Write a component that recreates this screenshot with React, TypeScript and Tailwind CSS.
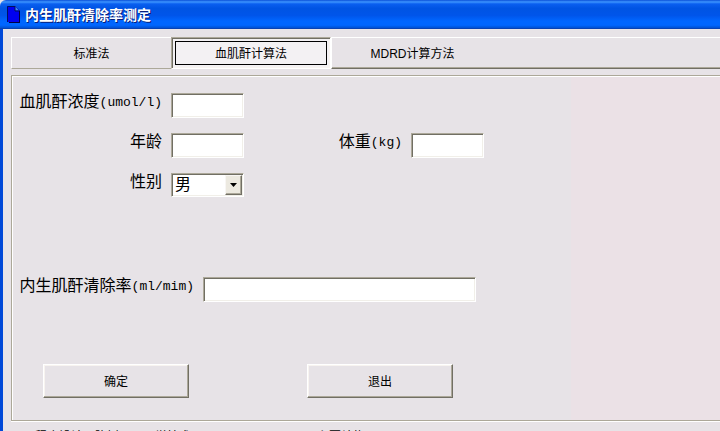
import { useState } from 'react';

const tabs = [
  { id: 'standard', label: '标准法' },
  { id: 'creatinine', label: '血肌酐计算法' },
  { id: 'mdrd', label: 'MDRD计算方法' },
];

const sunken =
  'border border-t-[#aca899] border-l-[#aca899] border-r-white border-b-white bg-white shadow-[inset_1px_1px_0_#716f64,inset_-1px_-1px_0_#f1efe9] outline-none';
const raised =
  'border border-t-white border-l-white border-r-[#716f64] border-b-[#716f64] bg-[#e7e3e7] shadow-[inset_-1px_-1px_0_#aca899,inset_1px_1px_0_#f8f4f0]';

function Label({ htmlFor, text, unit, className }: { htmlFor: string; text: string; unit?: string; className?: string }) {
  return (
    <label htmlFor={htmlFor} className={`flex justify-end whitespace-nowrap text-base leading-[18px] ${className ?? ''}`}>
      {text}
      {unit && <span className="font-['Liberation_Mono',monospace] text-[13px] leading-5">{unit}</span>}
    </label>
  );
}

export default function App() {
  const [active, setActive] = useState('creatinine');
  const [sex, setSex] = useState('男');

  return (
    <div className="flex h-screen flex-col overflow-hidden bg-[#e7e3e7] font-['Liberation_Sans','Noto_Sans_CJK_SC',sans-serif] text-black">
      {/* Title bar */}
      <header className="flex h-[29px] flex-none items-center gap-1 rounded-tl-md border-b border-[#0842b5] bg-[linear-gradient(180deg,#0a50d8_0%,#3d95ff_7%,#0a5ff0_14%,#0054e3_30%,#0055ea_55%,#0066ff_75%,#0066ff_90%,#0050d0_100%)] pl-[7px] pt-px">
        <svg width="14" height="17" viewBox="0 0 14 17" aria-hidden="true">
          <path d="M2 1h7l4 4v12H2z" fill="#000040" />
          <path d="M0 0h8l4 4v12H0z" fill="#0000f0" />
          <path d="M.5 16V.5H8" fill="none" stroke="#001060" />
          <path d="M8 0l4 4.500H8z" fill="#4088f0" />
          <path d="M8 0v5h4" fill="none" stroke="#001060" />
        </svg>
        <h1 className="text-sm font-bold leading-5 text-white [text-shadow:1px_1px_0_#0a1e78]">内生肌酐清除率测定</h1>
      </header>

      <main className="flex-1 border-l-[3px] border-[#0048d8] pl-2 pt-2">
        {/* Tabs */}
        <div role="tablist" className="flex h-8 text-xs">
          {tabs.map((tab) => (
            <button
              key={tab.id}
              type="button"
              role="tab"
              aria-selected={active === tab.id}
              onClick={() => setActive(tab.id)}
              className={`w-40 flex-none last:w-auto last:flex-1 last:pr-[227px] ${
                active === tab.id
                  ? 'border border-t-[#aca899] border-l-[#aca899] border-r-white border-b-white bg-[#f3f1f3] p-[3px] shadow-[inset_1px_1px_0_#716f64,inset_-1px_-1px_0_#f8f4f0]'
                  : 'border-t border-l border-b border-t-white border-l-white border-b-[#716f64] pt-0.5 shadow-[inset_0_-1px_0_#aca899] first:border-b-[#aca899] first:shadow-none'
              }`}
            >
              <span className={`flex h-full items-center justify-center ${active === tab.id ? 'border border-black pt-0.5' : ''}`}>
                {tab.label}
              </span>
            </button>
          ))}
        </div>

        {/* Form panel */}
        <form
          onSubmit={(e) => e.preventDefault()}
          className="mt-1.5 border border-r-0 border-[#aca899] bg-[linear-gradient(90deg,#e7e3e7_79%,#ebe1e6_79%)] shadow-[inset_1px_1px_0_#fff,0_1px_0_#fff]"
        >
          <div className="flex flex-col gap-[15px] pt-[17px]">
            <div className="flex items-start gap-[9px]">
              <Label htmlFor="scr" text="血肌酐浓度" unit="(umol/l)" className="w-[150px]" />
              <input id="scr" className={`h-[25px] w-[73px] px-1 ${sunken}`} />
            </div>
            <div className="flex items-start gap-[9px]">
              <Label htmlFor="age" text="年龄" className="w-[150px]" />
              <input id="age" className={`h-[25px] w-[73px] px-1 ${sunken}`} />
              <Label htmlFor="weight" text="体重" unit="(kg)" className="w-[149px]" />
              <input id="weight" className={`h-[25px] w-[73px] px-1 ${sunken}`} />
            </div>
            <div className="flex items-start gap-[9px]">
              <Label htmlFor="sex" text="性别" className="w-[150px]" />
              <div className="relative">
                <select
                  id="sex"
                  value={sex}
                  onChange={(e) => setSex(e.target.value)}
                  className={`block h-6 w-[73px] appearance-none pl-[3px] text-base leading-5 ${sunken}`}
                >
                  <option>男</option>
                  <option>女</option>
                </select>
                <span className="pointer-events-none absolute inset-y-0.5 right-0.5 flex w-[17px] items-center justify-center border border-t-[#f8f6f4] border-l-[#f8f6f4] border-r-[#716f64] border-b-[#716f64] bg-[#ece9e0] shadow-[inset_-1px_-1px_0_#aca899]">
                  <svg width="7" height="4" viewBox="0 0 7 4" aria-hidden="true">
                    <path d="M0 0h7L3.500 4z" />
                  </svg>
                </span>
              </div>
            </div>
          </div>

          <div className="flex items-start gap-[9px] pt-20">
            <Label htmlFor="ccr" text="内生肌酐清除率" unit="(ml/mim)" className="w-[182px]" />
            <input id="ccr" readOnly className={`h-[25px] w-[273px] px-1 ${sunken}`} />
          </div>

          <div className="flex gap-[118px] pt-[62px] pr-4 pb-[22px] pl-[31px] text-xs">
            <button type="submit" className={`h-[34px] w-[146px] pt-0.5 ${raised}`}>确定</button>
            <button type="button" className={`h-[34px] w-[146px] pt-0.5 ${raised}`}>退出</button>
          </div>
        </form>

        <footer className="flex gap-[126px] whitespace-nowrap pt-2 pl-6 text-xs leading-4">
          <p>程序设计：陈树国、医学技术</p>
          <p>主要结构</p>
        </footer>
      </main>
    </div>
  );
}
